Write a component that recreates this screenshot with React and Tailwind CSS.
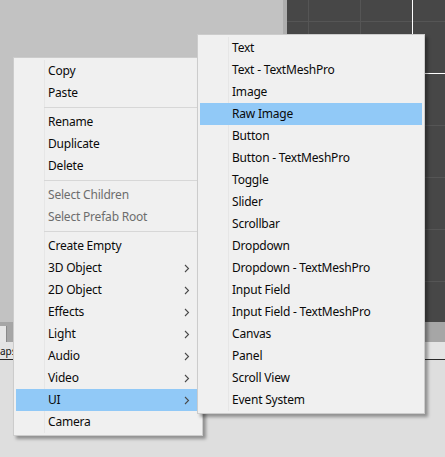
import React from 'react'

const mainItems = [
  { label: 'Copy' },
  { label: 'Paste' },
  { sep: true },
  { label: 'Rename' },
  { label: 'Duplicate' },
  { label: 'Delete' },
  { sep: true },
  { label: 'Select Children', disabled: true },
  { label: 'Select Prefab Root', disabled: true },
  { sep: true },
  { label: 'Create Empty' },
  { label: '3D Object', sub: true },
  { label: '2D Object', sub: true },
  { label: 'Effects', sub: true },
  { label: 'Light', sub: true },
  { label: 'Audio', sub: true },
  { label: 'Video', sub: true },
  { label: 'UI', sub: true, active: true },
  { label: 'Camera' },
]

const uiItems = [
  'Text',
  'Text - TextMeshPro',
  'Image',
  'Raw Image',
  'Button',
  'Button - TextMeshPro',
  'Toggle',
  'Slider',
  'Scrollbar',
  'Dropdown',
  'Dropdown - TextMeshPro',
  'Input Field',
  'Input Field - TextMeshPro',
  'Canvas',
  'Panel',
  'Scroll View',
  'Event System',
]

function Chevron() {
  return (
    <svg width="6" height="9" viewBox="0 0 6 9" className="shrink-0">
      <path d="M1 1l3.5 3.5L1 8" fill="none" stroke="#4a4a4a" strokeWidth="1.1" />
    </svg>
  )
}

function MenuRow({ item }) {
  if (item.sep) {
    return (
      <div className="h-[7px] flex items-center pl-[28px]">
        <div className="h-px w-full bg-[#d7d7d7]" />
      </div>
    )
  }
  return (
    <div
      className={`h-[22px] flex items-center pl-[32px] pr-[10px] ${item.active ? 'bg-[#91c9f7]' : ''} ${
        item.disabled ? 'text-[#6d6d6d]' : 'text-[#0a0a0a]'
      }`}
    >
      <span className="flex-1 whitespace-nowrap leading-none tracking-[-0.2px]">{item.label}</span>
      {item.sub && <Chevron />}
    </div>
  )
}

function Menu({ items, className }) {
  return (
    <div
      className={`absolute bg-[#f0f0f0] border border-[#cccccc] p-[2px] shadow-[3px_3px_3px_rgba(0,0,0,0.35)] ${className}`}
    >
      <div className="absolute top-[2px] bottom-[2px] left-[30px] w-px bg-[#e6e6e6]" />
      <div className="relative flex flex-col">
        {items.map((it, i) => (
          <MenuRow key={i} item={it} />
        ))}
      </div>
    </div>
  )
}

function SceneGrid() {
  const ys = [21, 73, 125, 177, 229, 281]
  return (
    <svg width="158" height="322" className="block">
      <rect width="158" height="322" fill="#474747" />
      {ys.map((y) => (
        <line key={y} x1="0" y1={y + 0.5} x2="158" y2={y + 0.5} stroke={y === 73 ? '#ffffff' : '#555555'} strokeWidth="1" />
      ))}
      <line x1="21.5" y1="0" x2="21.5" y2="322" stroke="#555555" />
      <line x1="73.5" y1="0" x2="73.5" y2="322" stroke="#555555" />
      <line x1="125.5" y1="0" x2="125.5" y2="322" stroke="#ffffff" />
    </svg>
  )
}

export default function App() {
  return (
    <div
      className="relative w-[445px] h-[457px] overflow-hidden bg-[#dedede] text-[12px]"
      style={{ fontFamily: '"Noto Sans", "Noto Sans CJK KR", sans-serif' }}
    >
      <div className="flex h-[322px]">
        <div className="w-[283px] bg-[#c2c2c2]" />
        <div className="w-[4px] bg-[#aeaeae]" />
        <SceneGrid />
      </div>
      <div className="h-[20px] bg-[#a6a6a6] flex items-end">
        <div className="w-[7px] h-[16px] bg-[#e6e6e6] border-r border-[#8a8a8a]" />
      </div>
      <div className="h-[18px] bg-[#e4e4e4] border-b border-[#2a2a2a] flex items-center">
        <span className="text-[10px] leading-none text-[#111]">aps</span>
      </div>

      <Menu items={mainItems} className="left-[13px] top-[57px] w-[190px]" />
      <Menu items={uiItems.map((l, i) => ({ label: l, active: i === 3 }))} className="left-[197px] top-[34px] w-[228px]" />
    </div>
  )
}
